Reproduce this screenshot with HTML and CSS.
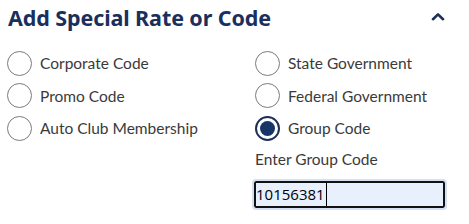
FILE: index.html
```html
<!DOCTYPE html>
<html>
<head>
  <meta charset="UTF-8">
  <title>Add Special Rate or Code</title>
  <link rel="stylesheet" href="styles.css">
</head>
<body>
  <div class="rate-panel">
    <div class="rate-header">
      <h2 class="rate-title">Add Special Rate or Code</h2>
      <svg class="chevron" viewBox="0 0 14 9" fill="none" stroke="currentColor">
        <path stroke-width="2.6" stroke-linecap="round" stroke-linejoin="round" d="M2 7.2L7 2.4l5 4.8"></path>
      </svg>
    </div>

    <div class="rate-options">
      <div class="option-col">
        <label class="option"><span class="radio"></span>Corporate Code</label>
        <label class="option"><span class="radio"></span>Promo Code</label>
        <label class="option"><span class="radio"></span>Auto Club Membership</label>
      </div>
      <div class="option-col">
        <label class="option"><span class="radio"></span>State Government</label>
        <label class="option"><span class="radio"></span>Federal Government</label>
        <label class="option"><span class="radio checked"></span>Group Code</label>

        <div class="code-field">
          <div class="code-label">Enter Group Code</div>
          <div class="code-input">10156381<span class="caret"></span></div>
        </div>
      </div>
    </div>
  </div>
</body>
</html>
```

FILE: styles.css
```css
* {
  margin: 0;
  padding: 0;
  box-sizing: border-box;
}

body {
  font-family: Lato, "Open Sans", sans-serif;
  background: #fff;
  color: #3a3a3a;
}

.rate-panel {
  width: 469px;
  height: 224px;
  padding: 0 8px 0 7px;
}

.rate-header {
  display: flex;
  align-items: center;
  justify-content: space-between;
  height: 33px;
  padding-top: 1px;
  padding-left: 1px;
}

.rate-title {
  font-family: "Noto Sans", sans-serif;
  font-size: 21.5px;
  font-weight: 700;
  color: #1b2f5c;
  letter-spacing: -0.1px;
}

.chevron {
  width: 14px;
  height: 9px;
  color: #1b2f5c;
  margin-right: 16px;
  margin-bottom: 2px;
}

.rate-options {
  display: grid;
  grid-template-columns: 248px 1fr;
  padding-top: 14px;
}

.option-col {
  display: flex;
  flex-direction: column;
}

.option {
  display: flex;
  align-items: center;
  gap: 8px;
  height: 32.5px;
  font-size: 15.5px;
  color: #3a3a3a;
}

.radio {
  width: 25px;
  height: 25px;
  border: 1px solid #7b7b7b;
  border-radius: 50%;
  flex-shrink: 0;
  display: flex;
  align-items: center;
  justify-content: center;
}

.radio.checked {
  border: 2px solid #1b2f5c;
}

.radio.checked::after {
  content: "";
  width: 15px;
  height: 15px;
  border-radius: 50%;
  background: #183569;
}

.code-field {
  padding-top: 2px;
}

.code-label {
  font-size: 15.5px;
  color: #3a3a3a;
  height: 24px;
  line-height: 24px;
  margin-bottom: 8px;
}

.code-input {
  width: 195px;
  height: 31px;
  margin-left: -3px;
  border: 2px solid #d3e0f4;
  border-radius: 4px;
  box-shadow: inset 0 0 0 2px #111;
  background: #e8f0fe;
  font-family: "Open Sans", sans-serif;
  font-size: 15px;
  color: #000;
  display: flex;
  align-items: center;
  padding-left: 2px;
}

.caret {
  width: 1px;
  height: 23px;
  background: #000;
  margin-left: 1px;
}
```
